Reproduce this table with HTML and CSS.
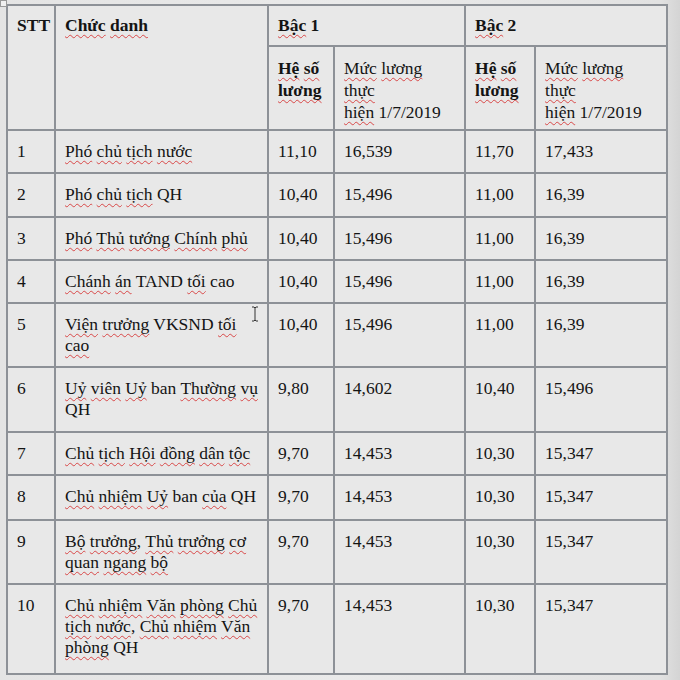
FILE: index.html
```html
<!DOCTYPE html>
<html lang="vi">
<head>
<meta charset="utf-8">
<title>Bảng lương</title>
<link rel="stylesheet" href="styles.css">
</head>
<body>
<div class="sheet">
  <span class="handle"></span>
  <table class="salary">
    <colgroup>
      <col class="c-stt"><col class="c-name"><col class="c-hs"><col class="c-ml"><col class="c-hs2"><col class="c-ml2">
    </colgroup>
    <thead>
      <tr class="h1">
        <th rowspan="2" class="b">STT</th>
        <th rowspan="2" class="b"><span class="sp">Chức</span> <span class="sp">danh</span></th>
        <th colspan="2" class="b"><span class="sp">Bậc</span> 1</th>
        <th colspan="2" class="b"><span class="sp">Bậc</span> 2</th>
      </tr>
      <tr class="h2">
        <th class="b"><span class="sp">Hệ</span> <span class="sp">số</span><br><span class="sp">lương</span></th>
        <th><span class="sp">Mức</span> <span class="sp">lương</span><br><span class="sp">thực</span><br><span class="sp">hiện</span> 1/7/2019</th>
        <th class="b"><span class="sp">Hệ</span> <span class="sp">số</span><br><span class="sp">lương</span></th>
        <th><span class="sp">Mức</span> <span class="sp">lương</span><br><span class="sp">thực</span><br><span class="sp">hiện</span> 1/7/2019</th>
      </tr>
    </thead>
    <tbody>
      <tr><td>1</td><td><span class="sp">Phó</span> <span class="sp">chủ</span> <span class="sp">tịch</span> <span class="sp">nước</span></td><td>11,10</td><td>16,539</td><td>11,70</td><td>17,433</td></tr>
      <tr class="plus1"><td>2</td><td><span class="sp">Phó</span> <span class="sp">chủ</span> <span class="sp">tịch</span> QH</td><td>10,40</td><td>15,496</td><td>11,00</td><td>16,39</td></tr>
      <tr><td>3</td><td><span class="sp">Phó</span> <span class="sp">Thủ</span> <span class="sp">tướng</span> <span class="sp">Chính</span> <span class="sp">phủ</span></td><td>10,40</td><td>15,496</td><td>11,00</td><td>16,39</td></tr>
      <tr><td>4</td><td><span class="sp">Chánh</span> <span class="sp">án</span> TAND <span class="sp">tối</span> cao</td><td>10,40</td><td>15,496</td><td>11,00</td><td>16,39</td></tr>
      <tr><td>5</td><td class="rel"><span class="sp">Viện</span> <span class="sp">trưởng</span> VKSND <span class="sp">tối</span><br><span class="sp">cao</span><svg class="ibeam" width="8" height="16" viewBox="0 0 8 16"><path d="M1 1h2l1 1 1-1h2M4 2v12M1 15h2l1-1 1 1h2" fill="none" stroke="#333" stroke-width="1"/></svg></td><td>10,40</td><td>15,496</td><td>11,00</td><td>16,39</td></tr>
      <tr class="plus1"><td>6</td><td><span class="sp">Uỷ</span> <span class="sp">viên</span> <span class="sp">Uỷ</span> ban <span class="sp">Thường</span> <span class="sp">vụ</span><br>QH</td><td>9,80</td><td>14,602</td><td>10,40</td><td>15,496</td></tr>
      <tr><td>7</td><td><span class="sp">Chủ</span> <span class="sp">tịch</span> <span class="sp">Hội</span> <span class="sp">đồng</span> <span class="sp">dân</span> <span class="sp">tộc</span></td><td>9,70</td><td>14,453</td><td>10,30</td><td>15,347</td></tr>
      <tr class="plus2"><td>8</td><td><span class="sp">Chủ</span> <span class="sp">nhiệm</span> <span class="sp">Uỷ</span> ban <span class="sp">của</span> QH</td><td>9,70</td><td>14,453</td><td>10,30</td><td>15,347</td></tr>
      <tr><td>9</td><td><span class="sp">Bộ</span> <span class="sp">trưởng</span>, <span class="sp">Thủ</span> <span class="sp">trưởng</span> <span class="sp">cơ</span><br><span class="sp">quan</span> <span class="sp">ngang</span> <span class="sp">bộ</span></td><td>9,70</td><td>14,453</td><td>10,30</td><td>15,347</td></tr>
      <tr class="last"><td>10</td><td><span class="sp">Chủ</span> <span class="sp">nhiệm</span> <span class="sp">Văn</span> <span class="sp">phòng</span> <span class="sp">Chủ</span><br><span class="sp">tịch</span> <span class="sp">nước</span>, <span class="sp">Chủ</span> <span class="sp">nhiệm</span> <span class="sp">Văn</span><br><span class="sp">phòng</span> QH</td><td>9,70</td><td>14,453</td><td>10,30</td><td>15,347</td></tr>
    </tbody>
  </table>
</div>
</body>
</html>
```
FILE: styles.css
```css
html, body {
  margin: 0;
  padding: 0;
  background: #d9d9d9;
}
.sheet {
  position: relative;
  padding: 4px 0 0 6px;
  width: 680px;
  height: 680px;
  box-sizing: border-box;
  background: linear-gradient(90deg, #e4e4e4 0, #eaeaea 50%, #e2e2e2 97%, #d4d4d4 100%);
  overflow: hidden;
}
.handle {
  position: absolute;
  left: 0;
  top: 0;
  width: 5px;
  height: 5px;
  border: 1px solid #999;
  background: #f0f0f0;
}
.salary {
  border-collapse: collapse;
  table-layout: fixed;
  width: 660px;
  font-family: "Liberation Serif", "Times New Roman", serif;
  font-size: 17.5px;
  line-height: 21px;
  color: #141414;
  background: #e8e8e8;
}
.c-stt { width: 48px; }
.c-name { width: 213px; }
.c-hs { width: 66px; }
.c-ml { width: 131px; }
.c-hs2 { width: 70px; }
.c-ml2 { width: 132px; }
.salary th,
.salary td {
  border: 2px solid #8d9197;
  vertical-align: top;
  text-align: left;
  padding: 10px 2px 10px 9px;
  font-weight: normal;
  white-space: nowrap;
}
.salary th.b { font-weight: bold; }
.salary .h1 th { height: 18px; padding-top: 9px; padding-bottom: 9px; }
.salary .h2 th { height: 66px; padding-top: 10px; padding-bottom: 6px; line-height: 22px; }
.salary .plus1 td { padding-bottom: 11px; }
.salary .plus2 td { padding-bottom: 12px; }
.salary .last td { padding-bottom: 15px; }
.sp {
  text-decoration: underline wavy #d84848;
  text-decoration-thickness: 1px;
  text-underline-offset: 3px;
  text-decoration-skip-ink: none;
}
.rel { position: relative; }
.ibeam {
  position: absolute;
  right: 8px;
  top: 2px;
}
```
